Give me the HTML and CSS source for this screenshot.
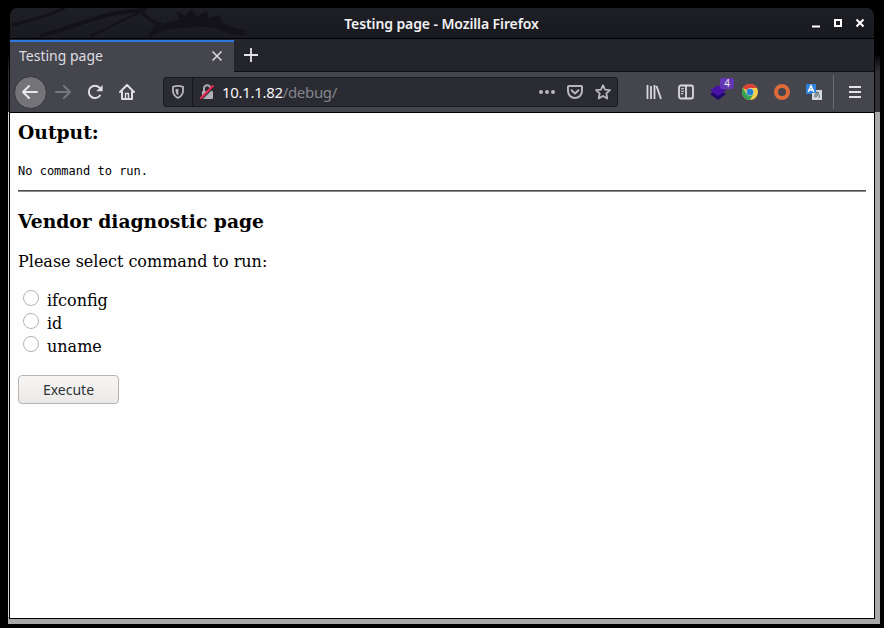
FILE: index.html
```html
<!DOCTYPE html>
<html lang="en">
<head>
<meta charset="utf-8">
<title>Testing page</title>
<link rel="stylesheet" href="styles.css">
</head>
<body>
<div class="desktop">
  <div class="window">
    <header class="titlebar">
      <svg class="dragon" width="250" height="30" viewBox="0 0 250 30" fill="none" stroke="#121218">
        <path d="M2 17C24 12 42 6 55 0" stroke-width="3"/>
        <path d="M30 28C63 20 94 3 130 3L136 0" stroke-width="4"/>
        <path d="M80 28C98 22 112 10 130 5" stroke-width="2"/>
        <path d="M128 0Q139 13 149 16Q143 20 140 29" stroke-width="3"/>
        <path d="M142 27Q148 14 170 12L166 3L176 8L181 1L187 9L196 3L199 10L209 7L213 15L224 20L237 23L233 28L217 25Q200 16 180 20Q160 18 142 27Z" fill="#121218" stroke="none"/>
      </svg>
      <span class="window-title">Testing page - Mozilla Firefox</span>
      <div class="controls">
        <svg width="10" height="10"><path d="M1 8.5H9" stroke="#fff" stroke-width="2"/></svg>
        <svg width="10" height="10"><rect x="2" y="2" width="6" height="6" fill="none" stroke="#fff" stroke-width="2"/></svg>
        <svg width="10" height="10"><path d="M1.5 1.5L8.5 8.5M8.5 1.5L1.5 8.5" stroke="#fff" stroke-width="2"/></svg>
      </div>
    </header>
    <div class="tabs">
      <div class="tab"><span>Testing page</span>
        <svg width="12" height="12"><path d="M1.5 1.5L10.5 10.5M10.5 1.5L1.5 10.5" stroke="#d8d8dc" stroke-width="1.6"/></svg>
      </div>
      <svg class="new-tab" width="16" height="16"><path d="M1 8H15M8 1V15" stroke="#e4e4e8" stroke-width="1.8"/></svg>
    </div>
    <nav class="toolbar">
      <span class="back"><svg width="16" height="16" viewBox="0 0 16 16" fill="none" stroke="#e8e8ea" stroke-width="2" stroke-linecap="round" stroke-linejoin="round"><path d="M15 8H1M7 2L1 8L7 14"/></svg></span>
      <svg class="forward" width="16" height="16" viewBox="0 0 16 16" fill="none" stroke="#77777e" stroke-width="2" stroke-linecap="round" stroke-linejoin="round"><path d="M1 8H15M9 2L15 8L9 14"/></svg>
      <svg class="reload" width="16" height="16" viewBox="0 0 16 16" fill="none" stroke="#dedee1" stroke-width="2"><path d="M13 11.5A6.2 6.2 0 1 1 12.5 3.6" stroke-linecap="round"/><path d="M15.6 1V7.3H9.2Z" fill="#dedee1" stroke="none"/></svg>
      <svg class="home" width="16" height="16" viewBox="0 0 16 16" fill="none" stroke="#dedee1" stroke-width="2" stroke-linejoin="round" stroke-linecap="round"><path d="M1 8L8 1L15 8M3 7V15H13V7"/><path d="M6.5 14V9.5H9.5V14" stroke-width="1.4"/></svg>
      <div class="urlbar">
        <span class="shield"><svg width="14" height="14" viewBox="0 0 14 14" fill="none" stroke="#b6b6bb" stroke-width="1.8"><path d="M2 1.9Q7 0 12 1.9V6Q12 10.5 7 13Q2 10.5 2 6Z"/><path d="M7.4 3.8V10.4Q4.6 8.8 4.6 6.4V4.1Z" fill="#b6b6bb" stroke="none"/></svg></span>
        <svg class="lock" width="16" height="16" viewBox="0 0 16 16"><path d="M5 8V4.5a3.2 3.2 0 0 1 6.4 0V8" fill="none" stroke="#aaa9b0" stroke-width="2"/><rect x="3" y="7" width="11" height="8" rx="1.2" fill="#b1b1b5"/><path d="M2.3 15.7L15.4 2.5" stroke="#292a32" stroke-width="1.4"/><path d="M1.3 14.7L14.4 1.5" stroke="#e22850" stroke-width="2.2"/></svg>
        <span class="url">10.1.1.82<i>/debug/</i></span>
        <svg class="dots" width="16" height="16" fill="#b6b6bb"><circle cx="2" cy="8" r="2"/><circle cx="8" cy="8" r="2"/><circle cx="14" cy="8" r="2"/></svg>
        <svg class="pocket" width="16" height="16" viewBox="0 0 16 16" fill="none" stroke="#b6b6bb" stroke-width="2"><path d="M1 2.8Q1 2 1.8 2H14.2Q15 2 15 2.8V7A7 7 0 0 1 1 7Z"/><path d="M4.5 6.2L8 9.5L11.5 6.2" stroke-linecap="round" stroke-linejoin="round"/></svg>
        <svg class="star" width="16" height="16" viewBox="0 0 16 16" fill="none" stroke="#b6b6bb" stroke-width="1.8" stroke-linejoin="round"><path d="M8 1.2L10 5.6L15 6.1L11.3 9.4L12.3 14.5L8 11.9L3.7 14.5L4.7 9.4L1 6.1L6 5.6Z"/></svg>
      </div>
      <div class="extensions">
        <svg width="16" height="16" viewBox="0 0 16 16" stroke="#dadade" stroke-width="1.8"><path d="M1.5 1V15M5 2V15M8.5 1V15M10.5 2L15 15"/></svg>
        <svg width="16" height="16" viewBox="0 0 16 16" fill="none" stroke="#dadade" stroke-width="1.8"><rect x="1" y="1.5" width="14" height="13" rx="2"/><path d="M8 2V14"/><path d="M3 4.7H6M3 7.2H6M3 9.6H5" stroke-width="1.1"/></svg>
        <span class="stack"><svg width="16" height="16" viewBox="0 0 16 16"><path d="M0 10L8 5.5L16 10L8 16Z" fill="#22076a"/><path d="M0 6.5L8 1L16 6.5L8 12Z" fill="#4613a6"/></svg><b>4</b></span>
        <svg width="16" height="16" viewBox="0 0 16 16"><circle cx="8" cy="8" r="8" fill="#f4cf4b"/><path d="M8 8L1.07 4A8 8 0 0 1 14.93 4H8Z" fill="#df4036"/><path d="M1.07 4A8 8 0 0 0 8 16L11.5 10L8 8L4.5 10Z" fill="#35a353"/><circle cx="8" cy="8" r="3.8" fill="#c9dbe0"/><circle cx="8" cy="8" r="3.3" fill="#2380cf"/></svg>
        <svg width="16" height="16"><circle cx="8" cy="8" r="6" fill="none" stroke="#dc6b39" stroke-width="4"/></svg>
        <svg width="16" height="16" viewBox="0 0 16 16"><rect x="6" y="6" width="10" height="10" fill="#d3d8db"/><path d="M8 8.5H13M10 7V13M12.5 9Q11 14 8.5 12.5Q8 10 12 10Q15 11 12.8 14" fill="none" stroke="#65747c"/><path d="M0 0H10V9H6V10H0Z" fill="#2d83dc"/><path d="M2.2 8L5 1.8L7.8 8M3.2 6H6.8" fill="none" stroke="#fff" stroke-width="1.5"/></svg>
      </div>
      <svg class="menu" width="12" height="14"><path d="M0 2H12M0 7H12M0 12H12" stroke="#e2e2e5" stroke-width="2"/></svg>
    </nav>
    <main class="page">
      <h3>Output:</h3>
      <pre>No command to run.</pre>
      <hr>
      <h3>Vendor diagnostic page</h3>
      <p>Please select command to run:</p>
      <form>
        <label><input type="radio" name="command">ifconfig</label>
        <label><input type="radio" name="command">id</label>
        <label><input type="radio" name="command">uname</label>
        <button type="button">Execute</button>
      </form>
    </main>
  </div>
</div>
</body>
</html>
```
FILE: styles.css
```css
* { box-sizing: border-box; }
body { margin: 0; background: #000; }
svg { display: block; flex: none; }
.desktop { position: relative; width: 884px; height: 628px; padding: 8px 9px 9px; overflow: hidden; }
.desktop::before { content: ""; position: absolute; left: 8px; top: 56px; width: 872px; height: 568px; background: linear-gradient(#08080a, #303035 16px, #303035 56px, #a9a9ab 56px); }
.desktop::after { content: ""; position: absolute; left: 8px; top: 112px; width: 1px; height: 505px; background: #d8d8d8; }
.window { position: relative; width: 866px; height: 611px; border: solid #000; border-width: 0 1px 1px; border-radius: 8px 8px 0 0; background: #000; overflow: hidden; font-family: "Noto Sans", sans-serif; }
.titlebar { position: relative; height: 30px; background: linear-gradient(#1e1e25, #191920); display: flex; align-items: center; justify-content: flex-end; }
.dragon { position: absolute; left: 0; top: 0; }
.window-title { position: absolute; left: 0; right: 0; top: 6px; text-align: center; color: #f2f2f4; font-size: 14px; line-height: 20px; font-weight: 600; letter-spacing: -.1px; padding-right: 1px; }
.controls { display: flex; gap: 12px; padding-right: 9px; }
.tabs { height: 33px; margin-top: 1px; display: flex; background: #24242d; border-bottom: 1px solid #0e0e16; }
.tab { width: 224px; height: 33px; margin-top: 1px; background: #45454d; border-top: 2px solid #2f78df; display: flex; align-items: center; justify-content: space-between; padding: 0 11px 3px 9px; color: #dedee2; font-size: 14px; }
.tab span { margin-top: -2px; }
.new-tab { margin: 8px 0 0 9px; }
.toolbar { height: 40px; background: #45454d; display: flex; align-items: center; position: relative; }
.back { width: 33px; height: 33px; margin-left: 4px; border-radius: 50%; background: #737378; border: 1px solid #34343b; display: flex; align-items: center; padding-left: 7px; }
.forward { margin-left: 8px; }
.reload { margin-left: 16px; }
.home { margin-left: 16px; }
.urlbar { width: 455px; height: 30px; margin-left: 28px; border: 1px solid #171820; border-radius: 3px; background: #292a32; display: flex; align-items: center; }
.shield { display: flex; align-items: center; width: 29px; height: 28px; padding-left: 7px; border-right: 1px solid #17171f; }
.lock { margin-left: 6px; }
.url { margin-left: 7px; color: #f5f5f7; font-size: 15px; line-height: 20px; letter-spacing: -.32px; }
.url i { font-style: normal; color: #85858c; }
.dots { margin-left: auto; }
.pocket { margin-left: 12px; }
.star { margin: 0 6px 0 12px; }
.extensions { display: flex; align-items: center; gap: 16px; width: 188px; margin-left: 28px; height: 34px; border-right: 1px solid #6a6a72; }
.stack { position: relative; }
.stack b { position: absolute; left: 10px; top: -6px; width: 14px; height: 11px; border-radius: 2px; background: #6337b3; color: #eee; font-size: 10px; line-height: 11px; font-weight: 400; text-align: center; }
.menu { margin-left: 15px; }
.page { margin-top: 1px; height: 505px; padding: 8px; background: #fefefe; color: #000; font: 16px/19px "DejaVu Serif", serif; }
h3 { font-size: 18.72px; line-height: 23px; margin: 0; }
pre { font: 12px/15px "DejaVu Sans Mono", monospace; margin: 20px 0 11px; }
hr { height: 2px; border: solid; border-width: 1px 0; border-color: #4b4b4b #8b8b8b; border-bottom-color: #8b8b8b; margin: 0 0 18px; }
p { margin: 19px 0; }
label { display: flex; height: 23px; line-height: 21px; }
input { appearance: none; width: 16px; height: 16px; margin: 0 8px 0 5px; border: 1px solid #b4b4b4; border-radius: 50%; background: #fff; }
button { display: block; width: 101px; height: 29px; margin-top: 16px; padding: 0; border: 1px solid #b7b4b1; border-radius: 4px; background: linear-gradient(#f7f6f5, #ebe9e7); color: #2e3436; font: 14px "Noto Sans", sans-serif; }
```
